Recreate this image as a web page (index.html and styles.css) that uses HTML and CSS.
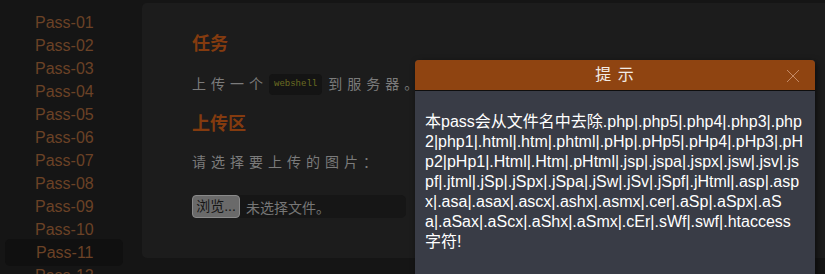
FILE: index.html
```html
<!DOCTYPE html>
<html lang="zh">
<head>
<meta charset="utf-8">
<title>upload-labs</title>
<link rel="stylesheet" href="styles.css">
</head>
<body>
<div class="page">
  <nav class="sidebar">
    <div class="item">Pass-01</div>
    <div class="item">Pass-02</div>
    <div class="item">Pass-03</div>
    <div class="item">Pass-04</div>
    <div class="item">Pass-05</div>
    <div class="item">Pass-06</div>
    <div class="item">Pass-07</div>
    <div class="item">Pass-08</div>
    <div class="item">Pass-09</div>
    <div class="item">Pass-10</div>
    <div class="item active">Pass-11</div>
    <div class="item">Pass-12</div>
  </nav>
  <main class="panel">
    <h2 class="title">任务</h2>
    <p class="text">上传一个<code class="code">webshell</code>到服务器。</p>
    <h2 class="title">上传区</h2>
    <p class="text text-sel">请选择要上传的图片：</p>
    <div class="file">
      <span class="file-btn">浏览...</span>
      <span class="file-name">未选择文件。</span>
    </div>
  </main>
</div>
<div class="dialog">
  <div class="dialog-head">
    <span class="dialog-title">提 示</span>
    <svg class="dialog-close" width="14" height="14" viewBox="0 0 14 14"><path d="M1 1L13 13M13 1L1 13" stroke="#c48a66" stroke-width="1" fill="none"/></svg>
  </div>
  <div class="dialog-body">本pass会从文件名中去除.php|.php5|.php4|.php3|.php<br>2|php1|.html|.htm|.phtml|.pHp|.pHp5|.pHp4|.pHp3|.pH<br>p2|pHp1|.Html|.Htm|.pHtml|.jsp|.jspa|.jspx|.jsw|.jsv|.js<br>pf|.jtml|.jSp|.jSpx|.jSpa|.jSw|.jSv|.jSpf|.jHtml|.asp|.asp<br>x|.asa|.asax|.ascx|.ashx|.asmx|.cer|.aSp|.aSpx|.aS<br>a|.aSax|.aScx|.aShx|.aSmx|.cEr|.sWf|.swf|.htaccess<br>字符!</div>
</div>
</body>
</html>
```
FILE: styles.css
```css
html, body {
  margin: 0;
  padding: 0;
}
body {
  width: 825px;
  height: 274px;
  overflow: hidden;
  background: #151515;
  font-family: "Liberation Sans", "Noto Sans CJK SC", sans-serif;
  position: relative;
}
.page {
  display: flex;
  align-items: flex-start;
}
.sidebar {
  width: 118px;
  flex: none;
  padding: 11px 5px 0 5px;
}
.item {
  height: 23px;
  line-height: 23px;
  padding-left: 30px;
  font-size: 16px;
  color: #6b4226;
  white-space: nowrap;
}
.item.active {
  padding: 2px 0 2px 31px;
  margin: -2px 0;
  background: #101010;
  border-radius: 5px;
}
.panel {
  margin: 3px 0 0 14px;
  flex: 1;
  min-width: 700px;
  background: #1c1c1c;
  border-radius: 5px;
  padding: 29px 0 40px 50px;
}
.title {
  margin: 0;
  font-size: 18px;
  line-height: 24px;
  font-weight: bold;
  color: #843b0f;
}
.text {
  margin: 16px 0 16px 0;
  font-size: 14px;
  line-height: 24px;
  letter-spacing: 5px;
  color: #7b7b7b;
  white-space: nowrap;
}
.text-sel {
  margin: 14px 0 21px 0;
}
.code {
  display: inline-block;
  vertical-align: top;
  margin: 2px 6px 0 1px;
  padding: 0 5px;
  height: 21px;
  line-height: 21px;
  font-family: "Liberation Mono", monospace;
  font-size: 9px;
  letter-spacing: 0;
  color: #6c6c22;
  background: #141414;
  border-radius: 4px;
}
.file {
  display: flex;
  align-items: center;
  width: 214px;
  height: 23px;
  background: #161616;
  border-radius: 5px;
}
.file-btn {
  box-sizing: border-box;
  width: 48px;
  height: 23px;
  line-height: 21px;
  text-align: center;
  font-size: 14px;
  color: #151515;
  background: #6a6a6a;
  border: 1px solid #8a8a8a;
  border-radius: 4px;
}
.file-name {
  margin-left: 6px;
  font-size: 14px;
  color: #777777;
}
.dialog {
  position: absolute;
  left: 415px;
  top: 60px;
  width: 400px;
  height: 240px;
  background: #393c46;
  border-radius: 4px 4px 0 0;
  box-shadow: 2px 2px 6px rgba(0, 0, 0, 0.55);
}
.dialog-head {
  position: relative;
  height: 30px;
  line-height: 30px;
  background: #8f4411;
  border-bottom: 1px solid #0e0e0e;
  border-radius: 4px 4px 0 0;
  text-align: center;
}
.dialog-title {
  font-size: 16px;
  color: #f2ece6;
  letter-spacing: 1px;
}
.dialog-close {
  position: absolute;
  right: 15px;
  top: 9px;
}
.dialog-body {
  padding: 21px 8px 0 10px;
  font-size: 16px;
  line-height: 20px;
  color: #ffffff;
  word-break: break-all;
}
```
